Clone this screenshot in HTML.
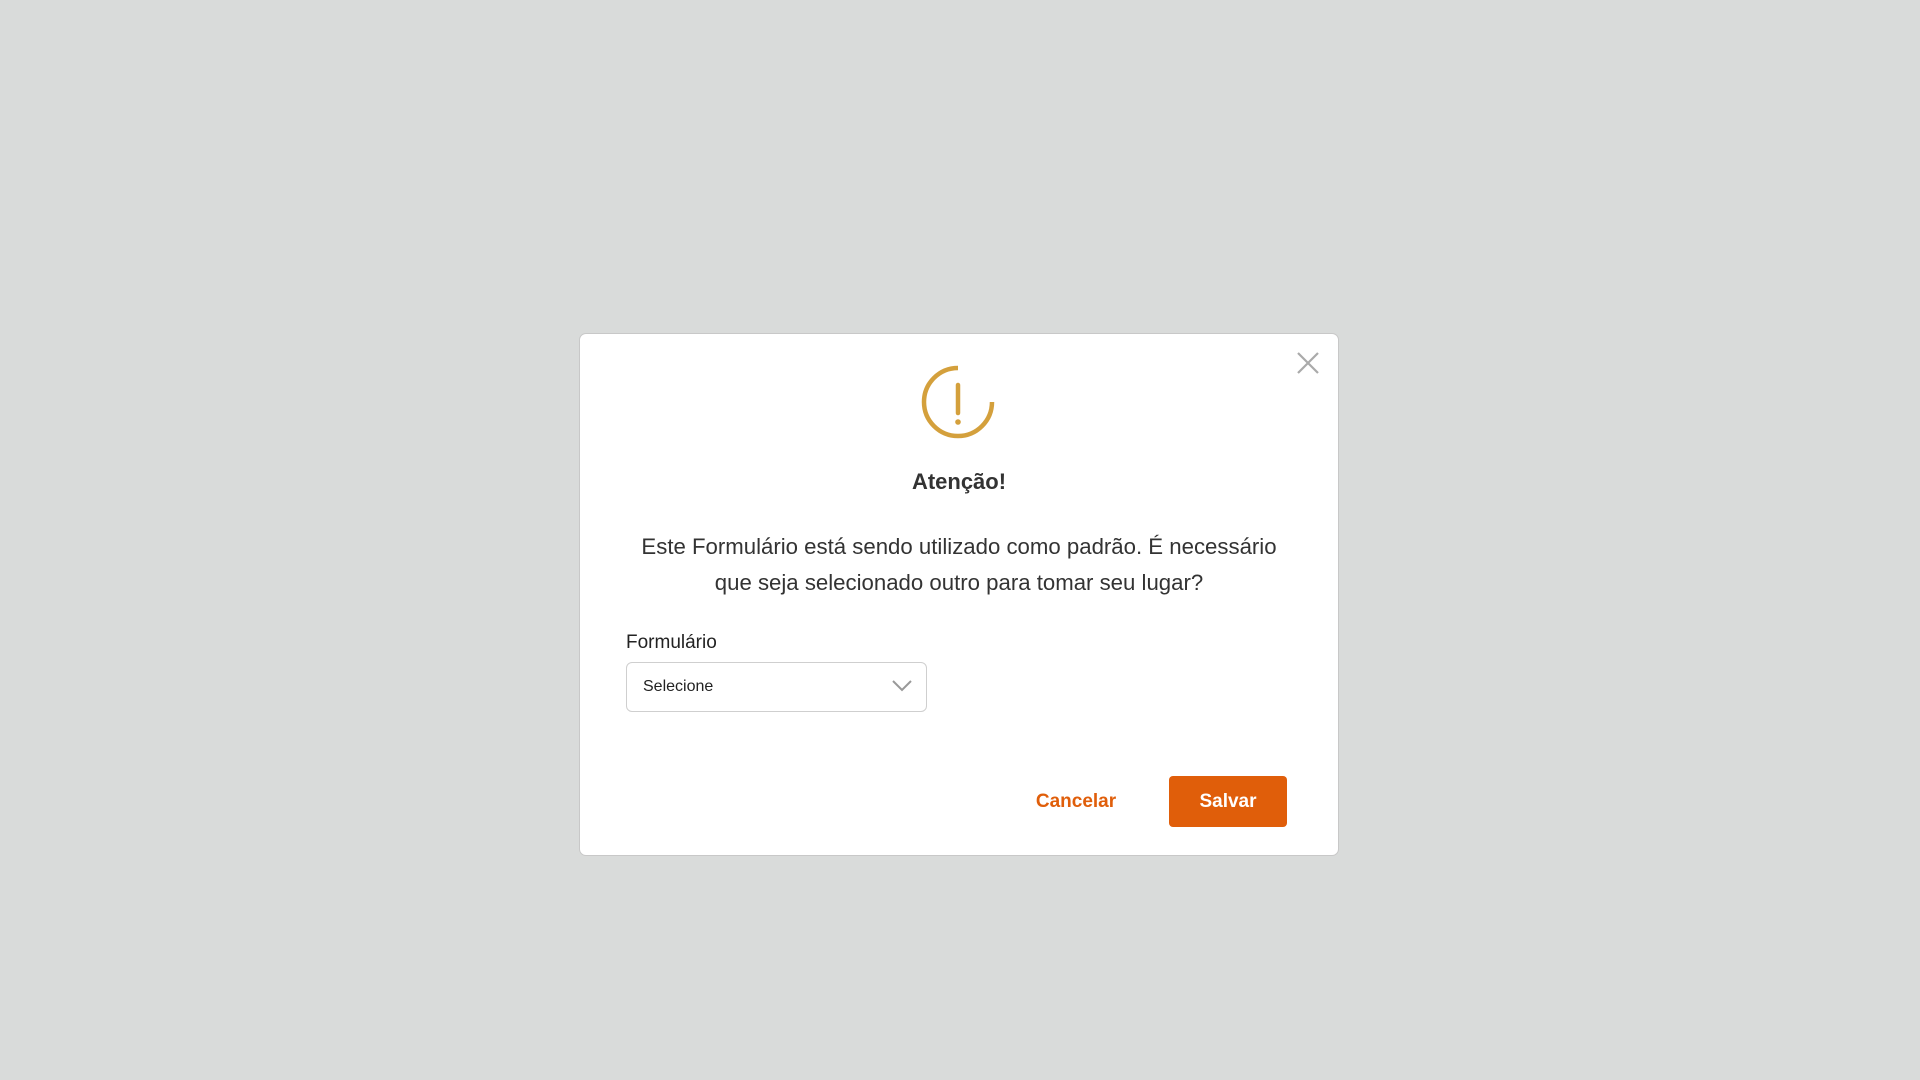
<!DOCTYPE html>
<html><head><meta charset="utf-8"><style>
*{margin:0;padding:0;box-sizing:border-box}
body{width:1920px;height:1080px;background:#d9dbda;font-family:"Liberation Sans",sans-serif;position:relative;overflow:hidden;color:#333}
.modal{position:absolute;left:579px;top:333px;width:760px;height:523px;background:#fff;border:1px solid #c8c8c8;border-radius:7px}
.abs{position:absolute}
.title{left:0;width:758px;top:135px;text-align:center;font-weight:bold;font-size:22px;color:#333}
.para{left:0;width:758px;top:195px;text-align:center;font-size:22.2px;line-height:36px;color:#333;white-space:nowrap}
.label{left:46px;top:298px;font-size:19px;color:#222}
.sel{left:46px;top:328px;width:301px;height:50px;border:1px solid #cfcfcf;border-radius:6px}
.sel span{position:absolute;left:16px;top:15px;font-size:16px;color:#222}
.cancel{left:446px;top:457px;font-size:19px;font-weight:bold;color:#e05e0a;width:100px;text-align:center}
.btn{left:589px;top:442px;width:118px;height:51px;background:#e05e0a;border-radius:4px;color:#fff;font-weight:bold;font-size:19px;text-align:center;line-height:51px}
</style></head><body>
<div class="modal">
<svg class="abs" style="left:716px;top:17px" width="24" height="24" viewBox="0 0 24 24"><path d="M2 2L22 22M22 2L2 22" stroke="#aaa" stroke-width="2.2" fill="none"/></svg>
<svg class="abs" style="left:338px;top:28px" width="80" height="80" viewBox="0 0 80 80"><path d="M40 6A34 34 0 1 0 74 40" stroke="#d4a03c" stroke-width="4.5" fill="none"/><line x1="40" y1="23" x2="40" y2="51" stroke="#d4a03c" stroke-width="4.5" stroke-linecap="round"/><circle cx="40" cy="60" r="2.8" fill="#d4a03c"/></svg>
<div class="abs title">Atenção!</div>
<div class="abs para">Este Formulário está sendo utilizado como padrão. É necessário<br>que seja selecionado outro para tomar seu lugar?</div>
<div class="abs label">Formulário</div>
<div class="abs sel"><span>Selecione</span><svg class="abs" style="left:264px;top:16px" width="22" height="14" viewBox="0 0 22 14"><path d="M2 2L11 11L20 2" stroke="#999" stroke-width="2" fill="none"/></svg></div>
<div class="abs cancel">Cancelar</div>
<div class="abs btn">Salvar</div>
</div>
</body></html>
